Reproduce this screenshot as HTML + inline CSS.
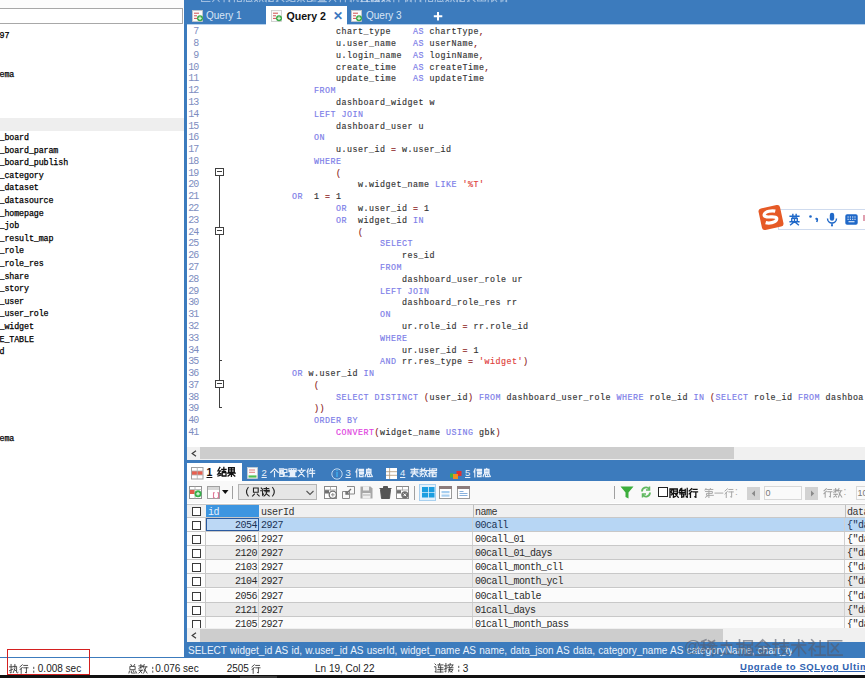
<!DOCTYPE html>
<html><head><meta charset="utf-8"><style>
*{margin:0;padding:0;box-sizing:border-box}
html,body{width:865px;height:678px;overflow:hidden;background:#fff;position:relative;font-family:"Liberation Sans",sans-serif}
.a{position:absolute}
i{font-style:normal}
.cl{position:absolute;font-family:"Liberation Mono",monospace;font-size:8.333px;letter-spacing:0.5px;line-height:12px;white-space:pre;color:#333;-webkit-text-stroke:0.15px}
.k{color:#7b7be8} .s{color:#e0403a} .p{color:#8b2020} .f{color:#e040e0}
.ln{position:absolute;left:184.2px;width:14px;text-align:right;font-family:"Liberation Mono",monospace;font-size:10px;letter-spacing:-1px;line-height:12px;color:#7d8dc0}
.tr{position:absolute;left:-0.5px;font-family:"Liberation Mono",monospace;font-size:8.333px;letter-spacing:-0.1px;line-height:10px;white-space:pre;color:#000;-webkit-text-stroke:0.25px #000}
.row{position:absolute;left:187px;width:678px;height:14.2px;border-bottom:1px solid #c8c8c8}
.row div{position:absolute;top:0;height:13.2px;font-family:"Liberation Mono",monospace;font-size:10px;letter-spacing:-0.5px;line-height:16px;white-space:pre;color:#2b2b2b;overflow:hidden}
.wht{background:#fbfbfb} .alt{background:#e9e9e9} .sel{background:#b7d6f4}
.row .cb{left:5px;top:3px;width:9px;height:9px;border:1.3px solid #3a3a3a;background:#fff}
.row .cw{left:0;top:0;width:19px;height:13.2px;background:#fdfdfd;border-right:1px solid #c8c8c8}
.row .c1{left:19px;width:53px;text-align:right;padding-right:1px;border-right:1px solid #d0d0d0}
.row .c2{left:72px;width:214px;padding-left:2px;border-right:1px solid #d0d0d0}
.row .c3{left:286px;width:372px;padding-left:2px;border-right:1px solid #d0d0d0}
.row .c4{left:658px;width:30px;padding-left:2px}
.sel .c1{border:1.5px solid #2a5aa0;background:#bcd8f5;line-height:13px}
.sel div{color:#1a3355}
.hd{position:absolute;top:505.5px;font-family:"Liberation Mono",monospace;font-size:10px;letter-spacing:-0.5px;line-height:13px;white-space:pre;color:#333}
.tb{position:absolute;font-size:10px;line-height:12px;white-space:pre}
</style></head><body>
<div class="a" style="left:0;top:0;width:184px;height:8px;background:#fcfcfc"></div>
<div class="a" style="left:-2px;top:8px;width:185px;height:16px;border:1px solid #a8a8a8;background:#fff"></div>
<div class="a" style="left:0;top:118px;width:184px;height:12.5px;background:#eeeeee"></div>
<div class="tr" style="top:31.0px">97</div><div class="tr" style="top:69.5px">ema</div><div class="tr" style="top:133.0px">_board</div><div class="tr" style="top:145.6px">_board_param</div><div class="tr" style="top:158.2px">_board_publish</div><div class="tr" style="top:170.8px">_category</div><div class="tr" style="top:183.4px">_dataset</div><div class="tr" style="top:196.0px">_datasource</div><div class="tr" style="top:208.6px">_homepage</div><div class="tr" style="top:221.2px">_job</div><div class="tr" style="top:233.8px">_result_map</div><div class="tr" style="top:246.4px">_role</div><div class="tr" style="top:259.0px">_role_res</div><div class="tr" style="top:271.6px">_share</div><div class="tr" style="top:284.2px">_story</div><div class="tr" style="top:296.8px">_user</div><div class="tr" style="top:309.4px">_user_role</div><div class="tr" style="top:322.0px">_widget</div><div class="tr" style="top:334.6px">E_TABLE</div><div class="tr" style="top:347.2px">d</div><div class="tr" style="top:434.0px">ema</div>
<div class="a" style="left:184px;top:0;width:3px;height:657px;background:#3c7bbd"></div>
<div class="a" style="left:184px;top:0;width:681px;height:24px;background:#3c7bbd"></div><div class="a" style="left:187px;top:24px;width:678px;height:1px;background:#b8d2ec"></div>
<svg class="a" style="left:189.00px;top:-9.50px" width="203.4" height="12.0" viewBox="0 0 203.4 12.0"><g fill="none" stroke="rgba(225,235,248,.6)" stroke-width="1.100" stroke-linecap="square" vector-effect="none"><path transform="translate(1.00 1.00) scale(1.000)" d="M1 5.2h8"/><path transform="translate(11.60 1.00) scale(1.000)" d="M9 1H1v8.5h8.3M3 3l4 4.5M7 3l-4 4.5"/><path transform="translate(22.20 1.00) scale(1.000)" d="M5 0.5v1.5M1 2.5h8M2.5 3l5.5 6.5M7.5 3L1.5 9.5"/><path transform="translate(32.80 1.00) scale(1.000)" d="M3.5 0.8L1 3M3.5 3.5L1 6M2.3 4.5v5.3M5 1.5h4M5 4h4.5M7.8 4v5.5l-1-0.5"/><path transform="translate(43.40 1.00) scale(1.000)" d="M2.5 0.8L1 4.5M2 3v6.8M4.5 1.5h5M4.5 3h5M5 4.5h4.5M5 6h4.5M5 7.5h4v2h-4z"/><path transform="translate(54.00 1.00) scale(1.000)" d="M5 0.5l-1 1M2.5 1.5h5v5h-5zM2.5 3.2h5M2.5 4.8h5M1.5 7.5l-0.5 2M3.5 7.5v2h4M5.5 7l0.5 1M8 7.5l1 2"/><path transform="translate(64.60 1.00) scale(1.000)" d="M1 2h4M3 0.5v4M1 4.5l4-2M1 6.5h4M2 6.5l2 3M4 6.5l-3 3M6.5 0.5l-1 3M6 3h3.5M8.5 3L6 9.5M6.5 5l3 4.5"/><path transform="translate(75.20 1.00) scale(1.000)" d="M0.5 3h3M2 0.5v9l-1-0.5M0.5 6.5l3-1.5M4.5 1h5v2h-5M4.5 1v8.5M6.5 3v2M4.5 5h5M5.5 6.5h3.5v3h-3.5z"/><path transform="translate(85.80 1.00) scale(1.000)" d="M1 1.5h8M1.5 3.5h7M1 5.5h8M5 0.5v5M5 5.5L1.5 9.5M5.5 6.5L9 9.5M3 7v2.5"/><path transform="translate(96.40 1.00) scale(1.000)" d="M3 0.5L1 4h2.5L1 7.5l3-0.5M1 9.5l3-1M5 2.5h4.5M7.2 0.5v4M5.5 4.5h3.5M5.5 6h4v3.5h-4z"/><path transform="translate(107.00 1.00) scale(1.000)" d="M2 0.8h6v4.5h-6zM2 3h6M5 0.8v9M1 6.5h8M5 6.5L1.5 9.5M5 6.5L8.5 9.5"/><path transform="translate(117.60 1.00) scale(1.000)" d="M0.5 1h4.5M0.8 2.5h4v7h-4zM2 2.5v3M3.5 2.5v3M0.8 6.5h4M5.8 1.5h3v3.5h-3v4h3.5"/><path transform="translate(128.20 1.00) scale(1.000)" d="M1 0.8h8v2h-8zM3.7 0.8v2M6.3 0.8v2M1 4h8M5 3v1M2.5 5h5v4h-5zM2.5 6.3h5M2.5 7.6h5M1 9.6h8"/><path transform="translate(138.80 1.00) scale(1.000)" d="M5 0.5v1.5M1 2.5h8M2.5 3l5.5 6.5M7.5 3L1.5 9.5"/><path transform="translate(149.40 1.00) scale(1.000)" d="M2.5 0.8L1 4.5M2 3v6.8M5 1l-1 2.5M4.5 3h5M4 6h5.5M7 0.5v9.3"/><path transform="translate(160.00 1.00) scale(1.000)" d="M0.5 3h3.5M2.2 0.5v9l-1-0.5M0.5 7l3.5-1.5M4.5 2.5h3.5v6c0 1 1 1 1.5 0.5M6.2 0.5v4.5L4.5 9M5.5 5.5l1.5 1.5"/><path transform="translate(170.60 1.00) scale(1.000)" d="M3.5 0.8L1 3M3.5 3.5L1 6M2.3 4.5v5.3M5 1.5h4M5 4h4.5M7.8 4v5.5l-1-0.5"/><path transform="translate(181.20 1.00) scale(1.000)" d="M3 0.5l1 1.5M7 0.5l-1 1.5M2.5 2.5h5v3.5h-5zM1.5 7.5l-0.5 2M3.5 7.5v2h4M5.5 7l0.5 1M8 7.5l1 2"/><path transform="translate(191.80 1.00) scale(1.000)" d="M1 2h4M3 0.5v4M1 4.5l4-2M1 6.5h4M2 6.5l2 3M4 6.5l-3 3M6.5 0.5l-1 3M6 3h3.5M8.5 3L6 9.5M6.5 5l3 4.5"/></g></svg><svg class="a" style="left:359.00px;top:-9.50px" width="150.4" height="12.0" viewBox="0 0 150.4 12.0"><g fill="none" stroke="rgba(225,235,248,.6)" stroke-width="1.100" stroke-linecap="square" vector-effect="none"><path transform="translate(1.00 1.00) scale(1.000)" d="M1 1l1 1M0.5 4h1.5v4l-1 1.5h8.5M4 2h5.5M6 0.5L4.5 5h5M7 3v6.5M4 7h5.5"/><path transform="translate(11.60 1.00) scale(1.000)" d="M0.5 3h3M2 0.5v9l-1-0.5M0.5 6.5l3-1.5M6.5 0.5v1.5M4.5 2h5M5 2.5l1 2M9 2.5l-1 2M4.5 5h5M6.5 5l-1.5 4.5M5 7h4.5l-2 2.5M5.5 8l3 1.5"/><path transform="translate(22.20 1.00) scale(1.000)" d="M5 0.5v1.5M1 2.5h8M2.5 3l5.5 6.5M7.5 3L1.5 9.5"/><path transform="translate(32.80 1.00) scale(1.000)" d="M2.5 0.8L1 4.5M2 3v6.8M5 1l-1 2.5M4.5 3h5M4 6h5.5M7 0.5v9.3"/><path transform="translate(43.40 1.00) scale(1.000)" d="M2 1l-1 2M1 2.5h4.5M3.2 0.5v9.3M0.5 4.5h5.5M1.2 6h4v3h-1M6.8 1.5v5.5M8.8 0.5v9l-1-0.5"/><path transform="translate(54.00 1.00) scale(1.000)" d="M3.5 0.8L1 3M3.5 3.5L1 6M2.3 4.5v5.3M5 1.5h4M5 4h4.5M7.8 4v5.5l-1-0.5"/><path transform="translate(64.60 1.00) scale(1.000)" d="M2.5 0.8L1 4.5M2 3v6.8M4.5 1.5h5M4.5 3h5M5 4.5h4.5M5 6h4.5M5 7.5h4v2h-4z"/><path transform="translate(75.20 1.00) scale(1.000)" d="M5 0.5l-1 1M2.5 1.5h5v5h-5zM2.5 3.2h5M2.5 4.8h5M1.5 7.5l-0.5 2M3.5 7.5v2h4M5.5 7l0.5 1M8 7.5l1 2"/><path transform="translate(85.80 1.00) scale(1.000)" d="M1 2h4M3 0.5v4M1 4.5l4-2M1 6.5h4M2 6.5l2 3M4 6.5l-3 3M6.5 0.5l-1 3M6 3h3.5M8.5 3L6 9.5M6.5 5l3 4.5"/><path transform="translate(96.40 1.00) scale(1.000)" d="M0.5 3h3M2 0.5v9l-1-0.5M0.5 6.5l3-1.5M4.5 1h5v2h-5M4.5 1v8.5M6.5 3v2M4.5 5h5M5.5 6.5h3.5v3h-3.5z"/><path transform="translate(107.00 1.00) scale(1.000)" d="M1 1.5h8M1.5 3.5h7M1 5.5h8M5 0.5v5M5 5.5L1.5 9.5M5.5 6.5L9 9.5M3 7v2.5"/><path transform="translate(117.60 1.00) scale(1.000)" d="M1 1h8v8h-8zM1 5h8M5 1v8"/><path transform="translate(128.20 1.00) scale(1.000)" d="M1 1h2.5l-1.5 3l1.5 2l-1 1M1 1v8.8M4.5 1h4v4.5h-4zM4.5 3.2h4M4.5 1v8.5l2-1M6 5.5l3.5 4M8.5 6l-1 1"/><path transform="translate(138.80 1.00) scale(1.000)" d="M2 1l-1 2M1 2.5h4.5M3.2 0.5v9.3M0.5 4.5h5.5M1.2 6h4v3h-1M6.8 1.5v5.5M8.8 0.5v9l-1-0.5"/></g></svg>
<div class="a" style="left:266px;top:6px;width:81px;height:19px;background:#fff"></div>
<div class="tb" style="left:206px;top:10px;color:#d8e6f6;font-size:10px">Query 1</div>
<div class="tb" style="left:286.5px;top:9.5px;color:#111;font-weight:bold;font-size:10.6px">Query 2</div>
<div class="tb" style="left:333px;top:9.5px;color:#3b78c0;font-weight:bold;font-size:12px">&#x2715;</div>
<div class="tb" style="left:366px;top:10px;color:#d8e6f6;font-size:10px">Query 3</div>
<svg class="a" style="left:433px;top:11px" width="10" height="10" viewBox="0 0 10 10"><path d="M5 1v8.5M0.8 5.2h8.5" stroke="#fff" stroke-width="2"/></svg>
<div class="cl" style="top:26.20px;left:336.00px">chart_type    <i class="k">AS</i> chartType<i class="p">,</i></div><div class="ln" style="top:26.20px">7</div><div class="cl" style="top:37.99px;left:336.00px">u.user_name   <i class="k">AS</i> userName<i class="p">,</i></div><div class="ln" style="top:37.99px">8</div><div class="cl" style="top:49.78px;left:336.00px">u.login_name  <i class="k">AS</i> loginName<i class="p">,</i></div><div class="ln" style="top:49.78px">9</div><div class="cl" style="top:61.57px;left:336.00px">create_time   <i class="k">AS</i> createTime<i class="p">,</i></div><div class="ln" style="top:61.57px">10</div><div class="cl" style="top:73.36px;left:336.00px">update_time   <i class="k">AS</i> updateTime</div><div class="ln" style="top:73.36px">11</div><div class="cl" style="top:85.15px;left:314.00px"><i class="k">FROM</i></div><div class="ln" style="top:85.15px">12</div><div class="cl" style="top:96.94px;left:336.00px">dashboard_widget w</div><div class="ln" style="top:96.94px">13</div><div class="cl" style="top:108.73px;left:314.00px"><i class="k">LEFT</i> <i class="k">JOIN</i></div><div class="ln" style="top:108.73px">14</div><div class="cl" style="top:120.52px;left:336.00px">dashboard_user u</div><div class="ln" style="top:120.52px">15</div><div class="cl" style="top:132.31px;left:314.00px"><i class="k">ON</i></div><div class="ln" style="top:132.31px">16</div><div class="cl" style="top:144.10px;left:336.00px">u.user_id <i class="p">=</i> w.user_id</div><div class="ln" style="top:144.10px">17</div><div class="cl" style="top:155.89px;left:314.00px"><i class="k">WHERE</i></div><div class="ln" style="top:155.89px">18</div><div class="cl" style="top:167.68px;left:336.00px"><i class="p">(</i></div><div class="ln" style="top:167.68px">19</div><div class="cl" style="top:179.47px;left:358.00px">w.widget_name <i class="k">LIKE</i> <i class="s">&#x27;%T&#x27;</i></div><div class="ln" style="top:179.47px">20</div><div class="cl" style="top:191.26px;left:292.00px"><i class="k">OR</i>  1 <i class="p">=</i> 1</div><div class="ln" style="top:191.26px">21</div><div class="cl" style="top:203.05px;left:336.00px"><i class="k">OR</i>  w.user_id <i class="p">=</i> 1</div><div class="ln" style="top:203.05px">22</div><div class="cl" style="top:214.84px;left:336.00px"><i class="k">OR</i>  widget_id <i class="k">IN</i></div><div class="ln" style="top:214.84px">23</div><div class="cl" style="top:226.63px;left:358.00px"><i class="p">(</i></div><div class="ln" style="top:226.63px">24</div><div class="cl" style="top:238.42px;left:380.00px"><i class="k">SELECT</i></div><div class="ln" style="top:238.42px">25</div><div class="cl" style="top:250.21px;left:402.00px">res_id</div><div class="ln" style="top:250.21px">26</div><div class="cl" style="top:262.00px;left:380.00px"><i class="k">FROM</i></div><div class="ln" style="top:262.00px">27</div><div class="cl" style="top:273.79px;left:402.00px">dashboard_user_role ur</div><div class="ln" style="top:273.79px">28</div><div class="cl" style="top:285.58px;left:380.00px"><i class="k">LEFT</i> <i class="k">JOIN</i></div><div class="ln" style="top:285.58px">29</div><div class="cl" style="top:297.37px;left:402.00px">dashboard_role_res rr</div><div class="ln" style="top:297.37px">30</div><div class="cl" style="top:309.16px;left:380.00px"><i class="k">ON</i></div><div class="ln" style="top:309.16px">31</div><div class="cl" style="top:320.95px;left:402.00px">ur.role_id <i class="p">=</i> rr.role_id</div><div class="ln" style="top:320.95px">32</div><div class="cl" style="top:332.74px;left:380.00px"><i class="k">WHERE</i></div><div class="ln" style="top:332.74px">33</div><div class="cl" style="top:344.53px;left:402.00px">ur.user_id <i class="p">=</i> 1</div><div class="ln" style="top:344.53px">34</div><div class="cl" style="top:356.32px;left:380.00px"><i class="k">AND</i> rr.res_type <i class="p">=</i> <i class="s">&#x27;widget&#x27;</i><i class="p">)</i></div><div class="ln" style="top:356.32px">35</div><div class="cl" style="top:368.11px;left:292.00px"><i class="k">OR</i> w.user_id <i class="k">IN</i></div><div class="ln" style="top:368.11px">36</div><div class="cl" style="top:379.90px;left:314.00px"><i class="p">(</i></div><div class="ln" style="top:379.90px">37</div><div class="cl" style="top:391.69px;left:336.00px"><i class="k">SELECT</i> <i class="k">DISTINCT</i> <i class="p">(</i>user_id<i class="p">)</i> <i class="k">FROM</i> dashboard_user_role <i class="k">WHERE</i> role_id <i class="k">IN</i> <i class="p">(</i><i class="k">SELECT</i> role_id <i class="k">FROM</i> dashboa</div><div class="ln" style="top:391.69px">38</div><div class="cl" style="top:403.48px;left:314.00px"><i class="p">)</i><i class="p">)</i></div><div class="ln" style="top:403.48px">39</div><div class="cl" style="top:415.27px;left:314.00px"><i class="k">ORDER</i> <i class="k">BY</i></div><div class="ln" style="top:415.27px">40</div><div class="cl" style="top:427.06px;left:336.00px"><i class="f">CONVERT</i><i class="p">(</i>widget_name <i class="k">USING</i> gbk<i class="p">)</i></div><div class="ln" style="top:427.06px">41</div>
<div class="a" style="left:215px;top:167.5px;width:8.5px;height:8.5px;border:1.2px solid #404040;background:#fff"></div>
<div class="a" style="left:217px;top:171.2px;width:4.5px;height:1.2px;background:#404040"></div>
<div class="a" style="left:218.9px;top:176px;width:1.2px;height:204px;background:#404040"></div>
<div class="a" style="left:218.9px;top:360px;width:3px;height:1.2px;background:#404040"></div>
<div class="a" style="left:215px;top:226.5px;width:8.5px;height:8.5px;border:1.2px solid #404040;background:#fff"></div>
<div class="a" style="left:217px;top:230.2px;width:4.5px;height:1.2px;background:#404040"></div>
<div class="a" style="left:215px;top:379.5px;width:8.5px;height:8.5px;border:1.2px solid #404040;background:#fff"></div>
<div class="a" style="left:217px;top:383.2px;width:4.5px;height:1.2px;background:#404040"></div>
<div class="a" style="left:218.9px;top:388px;width:1.2px;height:19.5px;background:#404040"></div>
<div class="a" style="left:218.9px;top:406.5px;width:3px;height:1.2px;background:#404040"></div>
<div class="a" style="left:187px;top:447px;width:678px;height:12.5px;background:#f0f0f0"></div>
<div class="a" style="left:200px;top:447px;width:534px;height:12px;background:#cdcdcd"></div>
<svg class="a" style="left:191px;top:450px" width="6" height="7" viewBox="0 0 6 7"><path d="M5 0.8L1.2 3.5L5 6.2" fill="none" stroke="#3a3a3a" stroke-width="1.2"/></svg>
<div class="a" style="left:184px;top:459.5px;width:681px;height:21.2px;background:#3c7bbd"></div>
<div class="a" style="left:187px;top:462.8px;width:55px;height:19px;background:#fff"></div>
<div class="tb" style="left:206.5px;top:466px;color:#111;font-weight:bold;font-size:10.5px;text-decoration:underline">1</div><svg class="a" style="left:216.00px;top:466.30px" width="21.4" height="11.5" viewBox="0 0 21.4 11.5"><g fill="none" stroke="#111" stroke-width="1.368" stroke-linecap="square" vector-effect="none"><path transform="translate(1.00 1.00) scale(0.950)" d="M3 0.5L1 4h2.5L1 7.5l3-0.5M1 9.5l3-1M5 2.5h4.5M7.2 0.5v4M5.5 4.5h3.5M5.5 6h4v3.5h-4z"/><path transform="translate(10.70 1.00) scale(0.950)" d="M2 0.8h6v4.5h-6zM2 3h6M5 0.8v9M1 6.5h8M5 6.5L1.5 9.5M5 6.5L8.5 9.5"/></g></svg>
<div class="tb" style="left:261.5px;top:466.5px;color:#e8f0fa;font-size:9.5px;text-decoration:underline">2</div><svg class="a" style="left:269.40px;top:466.50px" width="47.1" height="11.0" viewBox="0 0 47.1 11.0"><g fill="none" stroke="#e8f0fa" stroke-width="1.278" stroke-linecap="square" vector-effect="none"><path transform="translate(1.00 1.00) scale(0.900)" d="M5 0.8L0.8 5M5 0.8L9.2 5M5 4v5.6"/><path transform="translate(10.02 1.00) scale(0.900)" d="M0.5 1h4.5M0.8 2.5h4v7h-4zM2 2.5v3M3.5 2.5v3M0.8 6.5h4M5.8 1.5h3v3.5h-3v4h3.5"/><path transform="translate(19.04 1.00) scale(0.900)" d="M1 0.8h8v2h-8zM3.7 0.8v2M6.3 0.8v2M1 4h8M5 3v1M2.5 5h5v4h-5zM2.5 6.3h5M2.5 7.6h5M1 9.6h8"/><path transform="translate(28.06 1.00) scale(0.900)" d="M5 0.5v1.5M1 2.5h8M2.5 3l5.5 6.5M7.5 3L1.5 9.5"/><path transform="translate(37.08 1.00) scale(0.900)" d="M2.5 0.8L1 4.5M2 3v6.8M5 1l-1 2.5M4.5 3h5M4 6h5.5M7 0.5v9.3"/></g></svg>
<div class="tb" style="left:345.5px;top:466.5px;color:#e8f0fa;font-size:9.5px;text-decoration:underline">3</div><svg class="a" style="left:353.50px;top:466.50px" width="20.5" height="11.0" viewBox="0 0 20.5 11.0"><g fill="none" stroke="#e8f0fa" stroke-width="1.278" stroke-linecap="square" vector-effect="none"><path transform="translate(1.00 1.00) scale(0.900)" d="M2.5 0.8L1 4.5M2 3v6.8M4.5 1.5h5M4.5 3h5M5 4.5h4.5M5 6h4.5M5 7.5h4v2h-4z"/><path transform="translate(10.25 1.00) scale(0.900)" d="M5 0.5l-1 1M2.5 1.5h5v5h-5zM2.5 3.2h5M2.5 4.8h5M1.5 7.5l-0.5 2M3.5 7.5v2h4M5.5 7l0.5 1M8 7.5l1 2"/></g></svg>
<div class="tb" style="left:400px;top:466.5px;color:#e8f0fa;font-size:9.5px;text-decoration:underline">4</div><svg class="a" style="left:409.00px;top:466.50px" width="29.0" height="11.0" viewBox="0 0 29.0 11.0"><g fill="none" stroke="#e8f0fa" stroke-width="1.278" stroke-linecap="square" vector-effect="none"><path transform="translate(1.00 1.00) scale(0.900)" d="M1 1.5h8M1.5 3.5h7M1 5.5h8M5 0.5v5M5 5.5L1.5 9.5M5.5 6.5L9 9.5M3 7v2.5"/><path transform="translate(10.00 1.00) scale(0.900)" d="M1 2h4M3 0.5v4M1 4.5l4-2M1 6.5h4M2 6.5l2 3M4 6.5l-3 3M6.5 0.5l-1 3M6 3h3.5M8.5 3L6 9.5M6.5 5l3 4.5"/><path transform="translate(19.00 1.00) scale(0.900)" d="M0.5 3h3M2 0.5v9l-1-0.5M0.5 6.5l3-1.5M4.5 1h5v2h-5M4.5 1v8.5M6.5 3v2M4.5 5h5M5.5 6.5h3.5v3h-3.5z"/></g></svg>
<div class="tb" style="left:465px;top:466.5px;color:#e8f0fa;font-size:9.5px;text-decoration:underline">5</div><svg class="a" style="left:472.20px;top:466.50px" width="20.5" height="11.0" viewBox="0 0 20.5 11.0"><g fill="none" stroke="#e8f0fa" stroke-width="1.278" stroke-linecap="square" vector-effect="none"><path transform="translate(1.00 1.00) scale(0.900)" d="M2.5 0.8L1 4.5M2 3v6.8M4.5 1.5h5M4.5 3h5M5 4.5h4.5M5 6h4.5M5 7.5h4v2h-4z"/><path transform="translate(10.25 1.00) scale(0.900)" d="M5 0.5l-1 1M2.5 1.5h5v5h-5zM2.5 3.2h5M2.5 4.8h5M1.5 7.5l-0.5 2M3.5 7.5v2h4M5.5 7l0.5 1M8 7.5l1 2"/></g></svg>
<div class="a" style="left:187px;top:480.7px;width:678px;height:22.8px;background:#f9f9f9"></div>
<div class="a" style="left:238.3px;top:484.4px;width:78.5px;height:15.5px;background:#e6e6e6;border:1px solid #b4b4b4"></div>
<svg class="a" style="left:240.50px;top:486.30px" width="38.4" height="11.5" viewBox="0 0 38.4 11.5"><g fill="none" stroke="#222" stroke-width="1.158" stroke-linecap="square" vector-effect="none"><path transform="translate(1.00 1.00) scale(0.950)" d="M6.5 0.5Q3 5 6.5 9.5"/><path transform="translate(10.10 1.00) scale(0.950)" d="M2.5 1h5v4.5h-5zM3.5 7.5L1.5 9.5M6.5 7.5L8.5 9.5"/><path transform="translate(19.20 1.00) scale(0.950)" d="M1 1l1.5 1.5M0.5 4h2v4.5l1-1M4 1.5h5M6.5 0.5v3M4 3.5h5.5M5 5h4.5M7 3.5c0 3-1 5-3 6M7 7.5l2.5 2"/><path transform="translate(28.30 1.00) scale(0.950)" d="M3.5 0.5Q7 5 3.5 9.5"/></g></svg>
<svg class="a" style="left:305.5px;top:490px" width="8" height="6" viewBox="0 0 8 6"><path d="M0.5 1l3.5 3.5 3.5-3.5" fill="none" stroke="#555" stroke-width="1.1"/></svg>
<div class="a" style="left:232px;top:486px;width:1px;height:13px;background:#a0a0a0"></div>
<div class="a" style="left:414px;top:485.5px;width:1px;height:14px;background:#a0a0a0"></div>
<div class="a" style="left:613.5px;top:486px;width:1px;height:13px;background:#a0a0a0"></div>
<div class="a" style="left:657.5px;top:486.5px;width:10px;height:10px;border:1.2px solid #222;background:#fff"></div>
<svg class="a" style="left:668.00px;top:486.60px" width="30.8" height="11.8" viewBox="0 0 30.8 11.8"><g fill="none" stroke="#111" stroke-width="1.327" stroke-linecap="square" vector-effect="none"><path transform="translate(1.00 1.00) scale(0.980)" d="M1 1h2.5l-1.5 3l1.5 2l-1 1M1 1v8.8M4.5 1h4v4.5h-4zM4.5 3.2h4M4.5 1v8.5l2-1M6 5.5l3.5 4M8.5 6l-1 1"/><path transform="translate(10.60 1.00) scale(0.980)" d="M2 1l-1 2M1 2.5h4.5M3.2 0.5v9.3M0.5 4.5h5.5M1.2 6h4v3h-1M6.8 1.5v5.5M8.8 0.5v9l-1-0.5"/><path transform="translate(20.20 1.00) scale(0.980)" d="M3.5 0.8L1 3M3.5 3.5L1 6M2.3 4.5v5.3M5 1.5h4M5 4h4.5M7.8 4v5.5l-1-0.5"/></g></svg>
<svg class="a" style="left:703.20px;top:486.60px" width="32.0" height="11.8" viewBox="0 0 32.0 11.8"><g fill="none" stroke="#a8a8a8" stroke-width="1.020" stroke-linecap="square" vector-effect="none"><path transform="translate(1.00 1.00) scale(0.980)" d="M2 0.5L1 2M1.5 1.5h3M6.5 0.5L5.5 2M6 1.5h3M1.5 3.5h7v2h-6v2h7M5 3v6.8M4.5 7.5L1.5 9.5"/><path transform="translate(11.00 1.00) scale(0.980)" d="M1 5.2h8"/><path transform="translate(21.00 1.00) scale(0.980)" d="M3.5 0.8L1 3M3.5 3.5L1 6M2.3 4.5v5.3M5 1.5h4M5 4h4.5M7.8 4v5.5l-1-0.5"/></g></svg><div class="tb" style="left:735px;top:486px;color:#a8a8a8">:</div>
<div class="a" style="left:747px;top:487px;width:12.5px;height:12.5px;background:#d2d2d2"></div><svg class="a" style="left:751px;top:490px" width="5" height="7" viewBox="0 0 5 7"><path d="M4 0.5v6L0.8 3.5z" fill="#8a8a8a"/></svg>
<div class="a" style="left:763.5px;top:486px;width:38.5px;height:13.5px;background:#fafafa;border:1px solid #d8d8d8"></div>
<div class="tb" style="left:765.5px;top:487px;color:#777;font-size:9px">0</div>
<div class="a" style="left:805px;top:487px;width:12.5px;height:12.5px;background:#d2d2d2"></div><svg class="a" style="left:809.5px;top:490px" width="5" height="7" viewBox="0 0 5 7"><path d="M1 0.5v6L4.2 3.5z" fill="#8a8a8a"/></svg>
<svg class="a" style="left:822.00px;top:486.60px" width="21.6" height="11.5" viewBox="0 0 21.6 11.5"><g fill="none" stroke="#a0a0a0" stroke-width="1.053" stroke-linecap="square" vector-effect="none"><path transform="translate(1.00 1.00) scale(0.950)" d="M3.5 0.8L1 3M3.5 3.5L1 6M2.3 4.5v5.3M5 1.5h4M5 4h4.5M7.8 4v5.5l-1-0.5"/><path transform="translate(10.80 1.00) scale(0.950)" d="M1 2h4M3 0.5v4M1 4.5l4-2M1 6.5h4M2 6.5l2 3M4 6.5l-3 3M6.5 0.5l-1 3M6 3h3.5M8.5 3L6 9.5M6.5 5l3 4.5"/></g></svg><div class="tb" style="left:843.5px;top:486px;color:#a0a0a0">:</div>
<div class="a" style="left:855.5px;top:486px;width:12px;height:13.5px;background:#fafafa;border:1px solid #d8d8d8"></div>
<div class="tb" style="left:857.5px;top:487px;color:#777;font-size:9px">10</div>
<svg class="a" style="left:192px;top:10px" width="12" height="12" viewBox="0 0 12 12"><rect x="0.5" y="0.5" width="10" height="11" fill="#fafafa" stroke="#c8c8c8" stroke-width="0.8"/><path d="M2 3.2h5M2 5.8h3M2 8.4h3" stroke="#d05050" stroke-width="1"/><circle cx="8" cy="8.3" r="3" fill="#3aa845"/><path d="M8 6.5v3.6M6.2 8.3h3.6" stroke="#e8ffe8" stroke-width="1.1"/></svg><svg class="a" style="left:271px;top:10px" width="12" height="12" viewBox="0 0 12 12"><rect x="0.5" y="0.5" width="10" height="11" fill="#fafafa" stroke="#c8c8c8" stroke-width="0.8"/><path d="M2 3.2h5M2 5.8h3M2 8.4h3" stroke="#d05050" stroke-width="1"/><circle cx="8" cy="8.3" r="3" fill="#3aa845"/><path d="M8 6.5v3.6M6.2 8.3h3.6" stroke="#e8ffe8" stroke-width="1.1"/></svg><svg class="a" style="left:351px;top:10px" width="12" height="12" viewBox="0 0 12 12"><rect x="0.5" y="0.5" width="10" height="11" fill="#fafafa" stroke="#c8c8c8" stroke-width="0.8"/><path d="M2 3.2h5M2 5.8h3M2 8.4h3" stroke="#d05050" stroke-width="1"/><circle cx="8" cy="8.3" r="3" fill="#3aa845"/><path d="M8 6.5v3.6M6.2 8.3h3.6" stroke="#e8ffe8" stroke-width="1.1"/></svg><svg class="a" style="left:191px;top:466.5px" width="13" height="13" viewBox="0 0 13 13"><rect x="0.5" y="0.5" width="11.5" height="11.5" fill="#fff" stroke="#a0a0a0"/><rect x="1" y="4" width="10.5" height="4" fill="#e86050"/><path d="M6.25 0.5v11.5M0.5 4h11.5M0.5 8h11.5" stroke="#b0b0b0" stroke-width="0.8"/></svg><svg class="a" style="left:246.5px;top:467px" width="11" height="12" viewBox="0 0 11 12"><rect x="0.5" y="0.5" width="10" height="11" fill="#fbfbfb" stroke="#d0d0d0" stroke-width="0.7"/><path d="M2 3h6M2 5.3h6" stroke="#e07070" stroke-width="0.9"/><path d="M1.5 9.5h8" stroke="#50c050" stroke-width="2.2"/></svg><svg class="a" style="left:330.5px;top:467.5px" width="12" height="12" viewBox="0 0 12 12"><circle cx="6" cy="6" r="5.2" fill="none" stroke="#c0d8ef" stroke-width="1"/><path d="M6 4v5" stroke="#40b0f0" stroke-width="1.4"/><circle cx="6" cy="2.6" r="0.8" fill="#40b0f0"/></svg><svg class="a" style="left:385.5px;top:467.5px" width="11" height="11" viewBox="0 0 11 11"><rect x="0" y="0" width="11" height="11" fill="#ffffff"/><path d="M0 3.7h11M0 7.3h11M3.6 0v11" stroke="#b09878" stroke-width="0.8"/></svg><svg class="a" style="left:450px;top:470.5px" width="12" height="8" viewBox="0 0 12 8"><rect x="0" y="2.5" width="4" height="4" fill="#40b040"/><rect x="6.5" y="0" width="5" height="5" fill="#e03030"/><rect x="3" y="3" width="5" height="5" fill="#f09020"/></svg><svg class="a" style="left:189px;top:486px" width="13" height="13" viewBox="0 0 13 13"><rect x="0.5" y="0.5" width="12" height="12" fill="#fff" stroke="#909090"/><path d="M6 0.5v12M0.5 3.5h12" stroke="#b0b0b0" stroke-width="0.8"/><rect x="1" y="4" width="4.5" height="4" fill="#e05a4a"/><circle cx="9" cy="7.8" r="3.5" fill="#36b04a"/><path d="M9 6v3.6M7.2 7.8h3.6" stroke="#e6f8e6" stroke-width="1.2"/></svg><svg class="a" style="left:207px;top:486px" width="13" height="13" viewBox="0 0 13 13"><rect x="0.5" y="0.5" width="12" height="12" fill="#fff" stroke="#a0a0a0"/><rect x="1" y="1" width="11" height="3" fill="#d8d8d8"/><path d="M7.8 6.8h-1.3v5h1.3M10.2 6.8h1.3v5h-1.3" fill="none" stroke="#e07898" stroke-width="1.1"/></svg><svg class="a" style="left:222px;top:490px" width="7" height="4" viewBox="0 0 7 4"><path d="M0 0h6.5L3.25 4z" fill="#111"/></svg><svg class="a" style="left:324px;top:486px" width="13" height="13" viewBox="0 0 13 13"><rect x="0.5" y="0.5" width="12" height="12" fill="#fff" stroke="#8a8a8a"/><rect x="1" y="4" width="4" height="3.5" fill="#707070"/><path d="M6.5 0.5v4M0.5 4h12" stroke="#a0a0a0" stroke-width="0.8"/><circle cx="8.8" cy="8.8" r="3.6" fill="#fff" stroke="#707070" stroke-width="1.3"/><path d="M8.8 7v3.6M7 8.8h3.6" stroke="#909090"/></svg><svg class="a" style="left:342px;top:486px" width="13" height="13" viewBox="0 0 13 13"><path d="M0.5 5.5v7h7v-7z M5 0.5h7.5v7.5h-5" fill="none" stroke="#8a8a8a" stroke-width="1"/><path d="M9 3l-5 5M4 5v3h3" fill="none" stroke="#707070" stroke-width="1.3"/></svg><svg class="a" style="left:360px;top:486px" width="13" height="13" viewBox="0 0 13 13"><path d="M0.5 0.5h10l2 2v10h-12z" fill="#a8a8a8"/><rect x="3" y="0.5" width="6" height="4" fill="#f0f0f0"/><rect x="2.5" y="7" width="8" height="5.5" fill="#f0f0f0"/><path d="M3 9h7" stroke="#b0b0b0"/></svg><svg class="a" style="left:378.5px;top:486px" width="13" height="13" viewBox="0 0 13 13"><path d="M0.5 2.5h12M4.5 2.5v-2h4v2M1.5 3.5l1 9h8l1-9z" fill="#555" stroke="#555" stroke-width="1"/></svg><svg class="a" style="left:396px;top:486px" width="13" height="13" viewBox="0 0 13 13"><rect x="0.5" y="0.5" width="12" height="12" fill="#fff" stroke="#8a8a8a"/><rect x="1" y="4" width="4" height="3.5" fill="#707070"/><path d="M6.5 0.5v4M0.5 4h12" stroke="#a0a0a0" stroke-width="0.8"/><circle cx="8.8" cy="8.8" r="3.6" fill="#707070"/><path d="M7.5 7.5l2.6 2.6M10.1 7.5l-2.6 2.6" stroke="#fff" stroke-width="1"/></svg><div class="a" style="left:418.5px;top:484px;width:17.5px;height:16.5px;background:#e3f1fb;border:1px solid #a8d0ef"></div><svg class="a" style="left:422px;top:487px" width="12.5" height="10.5" viewBox="0 0 12.5 10.5"><rect x="0" y="0" width="6" height="5" fill="#1c9ee0"/><rect x="6.8" y="0" width="5.7" height="5" fill="#1c9ee0"/><rect x="0" y="5.7" width="6" height="4.8" fill="#1c9ee0"/><rect x="6.8" y="5.7" width="5.7" height="4.8" fill="#1c9ee0"/></svg><svg class="a" style="left:438.5px;top:486px" width="13" height="13" viewBox="0 0 13 13"><rect x="0.5" y="0.5" width="12" height="12" fill="#fff" stroke="#9a9a9a"/><rect x="0" y="0" width="13" height="3" fill="#8c7c7c"/><rect x="2.5" y="5" width="8" height="2.2" fill="#a8cff0"/><rect x="2.5" y="8.5" width="8" height="2.2" fill="#a8cff0"/></svg><svg class="a" style="left:456.5px;top:486px" width="13" height="13" viewBox="0 0 13 13"><rect x="0.5" y="0.5" width="12" height="12" fill="#fff" stroke="#9a9a9a"/><rect x="0" y="0" width="13" height="3" fill="#8c7c7c"/><path d="M2.5 5.5h4M2.5 7.5h8M2.5 9.5h8" stroke="#7aa8d8" stroke-width="0.9"/></svg><svg class="a" style="left:620px;top:486px" width="14" height="13" viewBox="0 0 14 13"><path d="M0.5 0.5h13L8.5 6.5v6l-3-1.5v-4.5z" fill="#3cae3c"/></svg><svg class="a" style="left:639.5px;top:486px" width="12" height="12" viewBox="0 0 12 12"><path d="M2 5.5a4 4 0 0 1 7.2-2.4M10 6.5a4 4 0 0 1-7.2 2.4" fill="none" stroke="#60b860" stroke-width="1.8"/><path d="M9.5 0.5v3.5h-3.5M2.5 11.5v-3.5h3.5" fill="none" stroke="#60b860" stroke-width="1.5"/></svg>
<div class="a" style="left:187px;top:503.5px;width:678px;height:14px;background:#f0f0f0;border-top:1px solid #c8c8c8;border-bottom:1px solid #c8c8c8"></div>
<div class="a" style="left:192px;top:506.5px;width:9px;height:9px;border:1.3px solid #3a3a3a;background:#fff"></div>
<div class="a" style="left:206px;top:504.5px;width:53px;height:12.5px;background:#3d95e0"></div>
<div class="hd" style="left:208px;color:#e8f2fc">id</div>
<div class="hd" style="left:261px">userId</div>
<div class="a" style="left:473px;top:504.5px;width:1px;height:13px;background:#c0c0c0"></div>
<div class="hd" style="left:475px">name</div>
<div class="a" style="left:845px;top:504.5px;width:1px;height:13px;background:#c0c0c0"></div>
<div class="hd" style="left:847px">data</div>
<div class="row sel" style="top:517.50px"><div class="cw"></div><div class="cb"></div><div class="c1">2054</div><div class="c2">2927</div><div class="c3">00call</div><div class="c4">{"da</div></div><div class="row wht" style="top:531.70px"><div class="cw"></div><div class="cb"></div><div class="c1">2061</div><div class="c2">2927</div><div class="c3">00call_01</div><div class="c4">{"da</div></div><div class="row alt" style="top:545.90px"><div class="cw"></div><div class="cb"></div><div class="c1">2120</div><div class="c2">2927</div><div class="c3">00call_01_days</div><div class="c4">{"da</div></div><div class="row wht" style="top:560.10px"><div class="cw"></div><div class="cb"></div><div class="c1">2103</div><div class="c2">2927</div><div class="c3">00call_month_cll</div><div class="c4">{"da</div></div><div class="row alt" style="top:574.30px"><div class="cw"></div><div class="cb"></div><div class="c1">2104</div><div class="c2">2927</div><div class="c3">00call_month_ycl</div><div class="c4">{"da</div></div><div class="row wht" style="top:588.50px"><div class="cw"></div><div class="cb"></div><div class="c1">2056</div><div class="c2">2927</div><div class="c3">00call_table</div><div class="c4">{"da</div></div><div class="row alt" style="top:602.70px"><div class="cw"></div><div class="cb"></div><div class="c1">2121</div><div class="c2">2927</div><div class="c3">01call_days</div><div class="c4">{"da</div></div><div class="row wht" style="top:616.90px"><div class="cw"></div><div class="cb"></div><div class="c1">2105</div><div class="c2">2927</div><div class="c3">01call_month_pass</div><div class="c4">{"da</div></div>
<div class="a" style="left:187px;top:628px;width:678px;height:14px;background:#f0f0f0"></div>
<div class="a" style="left:200px;top:628.5px;width:523px;height:13px;background:#cdcdcd"></div>
<svg class="a" style="left:191px;top:631.8px" width="6" height="7" viewBox="0 0 6 7"><path d="M5 0.8L1.2 3.5L5 6.2" fill="none" stroke="#3a3a3a" stroke-width="1.2"/></svg>
<div class="a" style="left:184px;top:642px;width:681px;height:15.5px;background:#3c7bbd"></div>
<div class="tb" style="left:188px;top:644.5px;width:604px;overflow:hidden;color:#eaf2fb;font-size:10px;word-spacing:0.45px">SELECT widget_id AS id, w.user_id AS userId, widget_name AS name, data_json AS data, category_name AS categoryName, chart_type AS chartType</div>
<div class="a" style="left:0;top:657px;width:865px;height:1px;background:#3c7bbd"></div>
<div class="a" style="left:0;top:675px;width:865px;height:3px;background:#111"></div><div class="a" style="left:240px;top:676px;width:37px;height:2px;background:#3a3a3a"></div>
<svg class="a" style="left:8.00px;top:662.50px" width="32.0" height="11.5" viewBox="0 0 32.0 11.5"><g fill="none" stroke="#333" stroke-width="0.895" stroke-linecap="square" vector-effect="none"><path transform="translate(1.00 1.00) scale(0.950)" d="M0.5 3h3.5M2.2 0.5v9l-1-0.5M0.5 7l3.5-1.5M4.5 2.5h3.5v6c0 1 1 1 1.5 0.5M6.2 0.5v4.5L4.5 9M5.5 5.5l1.5 1.5"/><path transform="translate(11.00 1.00) scale(0.950)" d="M3.5 0.8L1 3M3.5 3.5L1 6M2.3 4.5v5.3M5 1.5h4M5 4h4.5M7.8 4v5.5l-1-0.5"/><path transform="translate(21.00 1.00) scale(0.950)" d="M5 3.5v1.2M5 7.5v1.2"/></g></svg><div class="tb" style="left:37.8px;top:662.5px;color:#222">0.008 sec</div>
<svg class="a" style="left:126.50px;top:662.50px" width="32.0" height="11.5" viewBox="0 0 32.0 11.5"><g fill="none" stroke="#333" stroke-width="0.895" stroke-linecap="square" vector-effect="none"><path transform="translate(1.00 1.00) scale(0.950)" d="M3 0.5l1 1.5M7 0.5l-1 1.5M2.5 2.5h5v3.5h-5zM1.5 7.5l-0.5 2M3.5 7.5v2h4M5.5 7l0.5 1M8 7.5l1 2"/><path transform="translate(11.00 1.00) scale(0.950)" d="M1 2h4M3 0.5v4M1 4.5l4-2M1 6.5h4M2 6.5l2 3M4 6.5l-3 3M6.5 0.5l-1 3M6 3h3.5M8.5 3L6 9.5M6.5 5l3 4.5"/><path transform="translate(21.00 1.00) scale(0.950)" d="M5 3.5v1.2M5 7.5v1.2"/></g></svg><div class="tb" style="left:155.3px;top:662.5px;color:#222">0.076 sec</div>
<div class="tb" style="left:226.7px;top:662.5px;color:#222">2505</div><svg class="a" style="left:249.50px;top:662.50px" width="12.0" height="11.5" viewBox="0 0 12.0 11.5"><g fill="none" stroke="#333" stroke-width="0.895" stroke-linecap="square" vector-effect="none"><path transform="translate(1.00 1.00) scale(0.950)" d="M3.5 0.8L1 3M3.5 3.5L1 6M2.3 4.5v5.3M5 1.5h4M5 4h4.5M7.8 4v5.5l-1-0.5"/></g></svg>
<div class="tb" style="left:315px;top:662.5px;color:#222">Ln 19, Col 22</div>
<svg class="a" style="left:433.00px;top:662.20px" width="32.0" height="11.5" viewBox="0 0 32.0 11.5"><g fill="none" stroke="#333" stroke-width="0.895" stroke-linecap="square" vector-effect="none"><path transform="translate(1.00 1.00) scale(0.950)" d="M1 1l1 1M0.5 4h1.5v4l-1 1.5h8.5M4 2h5.5M6 0.5L4.5 5h5M7 3v6.5M4 7h5.5"/><path transform="translate(11.00 1.00) scale(0.950)" d="M0.5 3h3M2 0.5v9l-1-0.5M0.5 6.5l3-1.5M6.5 0.5v1.5M4.5 2h5M5 2.5l1 2M9 2.5l-1 2M4.5 5h5M6.5 5l-1.5 4.5M5 7h4.5l-2 2.5M5.5 8l3 1.5"/><path transform="translate(21.00 1.00) scale(0.950)" d="M5 3.5v1.2M5 7.5v1.2"/></g></svg><div class="tb" style="left:462.8px;top:662.5px;color:#222">3</div>
<div class="tb" style="left:740px;top:661px;color:#2f62b0;font-weight:bold;font-size:9.5px;letter-spacing:0.6px;text-decoration:underline">Upgrade to SQLyog Ultimate</div>
<div class="a" style="left:7px;top:649px;width:83px;height:26px;border:1.5px solid #d42020"></div>
<div class="tb" style="left:684px;top:636.5px;color:rgba(85,90,105,0.6);font-size:17px;line-height:20px">@</div><svg class="a" style="left:698.60px;top:637.50px" width="146.4" height="19.0" viewBox="0 0 146.4 19.0"><g fill="none" stroke="rgba(85,90,105,0.6)" stroke-width="0.941" stroke-linecap="square" vector-effect="none"><path transform="translate(1.00 1.00) scale(1.700)" d="M3.5 0.5L1 1.5M0.5 3.5h4M2.3 1v8.8M2.3 4L0.5 7.5M2.5 4.5l1.5 1.5M5 1l3.5 2M8.5 1L5 3M4.8 4h5M6.5 3.5l-1.5 3.5M6 6h3.5v2.5M7.5 5v4.8"/><path transform="translate(19.05 1.00) scale(1.700)" d="M2 3.6h6M1 8.6h8M5 1v7.6"/><path transform="translate(37.10 1.00) scale(1.700)" d="M0.5 3h3M2 0.5v9l-1-0.5M0.5 6.5l3-1.5M4.5 1h5v2.5h-5M4.5 1c0 5-0.5 7-1 8.5M6.8 4.5v5M5.3 5.5v4h4.2v-4M8.3 4.5v5"/><path transform="translate(55.15 1.00) scale(1.700)" d="M5 0.5L0.8 4.5M5 0.5L9.2 4.5M2.5 4.5h5M1.5 6.5h7M5 4.5v5M3 7.2l1 1.2M7 7.2l-1 1.2M1 9.5h8"/><path transform="translate(73.20 1.00) scale(1.700)" d="M0.5 3h3M2 0.5v9l-1-0.5M0.5 6.5l3-1.5M4.5 2.5h5M7 0.5v4M5 4.5h4l-3.5 5M5.5 6l4 3.5"/><path transform="translate(91.25 1.00) scale(1.700)" d="M1 3.5h8M5 0.5v9.3M5 3.5L1 8.5M5 3.5L9 8.5M7 1l1 1"/><path transform="translate(109.30 1.00) scale(1.700)" d="M2 0.5l1 1M0.5 2.5h3l-3 4M2 4.5v5.3M2.5 5.5l1.5 1.5M4.5 4.5h5M7 1v8.5M4 9.5h6"/><path transform="translate(127.35 1.00) scale(1.700)" d="M9 1H1v8.5h8.3M3 3l4 4.5M7 3l-4 4.5"/></g></svg>
<div class="a" style="left:778px;top:209px;width:87px;height:20.5px;background:#fff;border:1px solid #cfdbee;border-right:none"></div>
<svg class="a" style="left:757px;top:204px" width="28" height="27" viewBox="0 0 28 27"><g transform="rotate(-12 14 13.5)"><rect x="3" y="2.5" width="22" height="22" rx="3" fill="#e65a26"/><path d="M19.5 8.2c-3.5-1.6-9.5-1.8-11.3 0.6c-1.6 2.2 1.5 3.6 5.5 4c4 0.5 6.8 1.8 5.2 4.2c-1.8 2.4-7.8 2.2-11.2 0.4" fill="none" stroke="#fff" stroke-width="3.2"/></g></svg>
<svg class="a" style="left:787.70px;top:212.80px" width="13.0" height="13.0" viewBox="0 0 13.0 13.0"><g fill="none" stroke="#1f68c8" stroke-width="1.273" stroke-linecap="square" vector-effect="none"><path transform="translate(1.00 1.00) scale(1.100)" d="M1 2h8M3.5 0.5v3M6.5 0.5v3M2.5 4h5v3h-5zM1 7h8M5 3.5v3.5M5 7L1.5 9.8M5 7L8.5 9.8"/></g></svg>
<svg class="a" style="left:808px;top:214px" width="12" height="11" viewBox="0 0 12 11"><circle cx="2.5" cy="2.5" r="1.3" fill="#1f68c8"/><path d="M8.5 4.5c1 0 1.2 1.5 0.2 3.5" fill="none" stroke="#1f68c8" stroke-width="1.6"/><circle cx="8.4" cy="4.8" r="1.1" fill="#1f68c8"/></svg>
<svg class="a" style="left:826px;top:212px" width="12" height="15" viewBox="0 0 12 15"><rect x="3.8" y="0.8" width="4.4" height="8" rx="2.2" fill="#1f68c8"/><path d="M1.5 6.5a4.5 4.5 0 0 0 9 0M6 11v2.5" fill="none" stroke="#1f68c8" stroke-width="1.4"/><circle cx="6" cy="13.6" r="1" fill="#1f68c8"/></svg>
<svg class="a" style="left:845px;top:214px" width="13" height="11" viewBox="0 0 13 11"><rect x="0.3" y="0.3" width="12.4" height="10.4" rx="1.8" fill="#1f68c8"/><path d="M2.5 3h1.2M4.8 3h1.2M7.1 3h1.2M9.4 3h1.2M2.5 5.3h1.2M4.8 5.3h1.2M7.1 5.3h1.2M9.4 5.3h1.2M3.5 7.8h6" stroke="#fff" stroke-width="1.1"/></svg>
<div class="a" style="left:863px;top:215px;width:2px;height:6px;background:#e0a0b0"></div>
</body></html>
